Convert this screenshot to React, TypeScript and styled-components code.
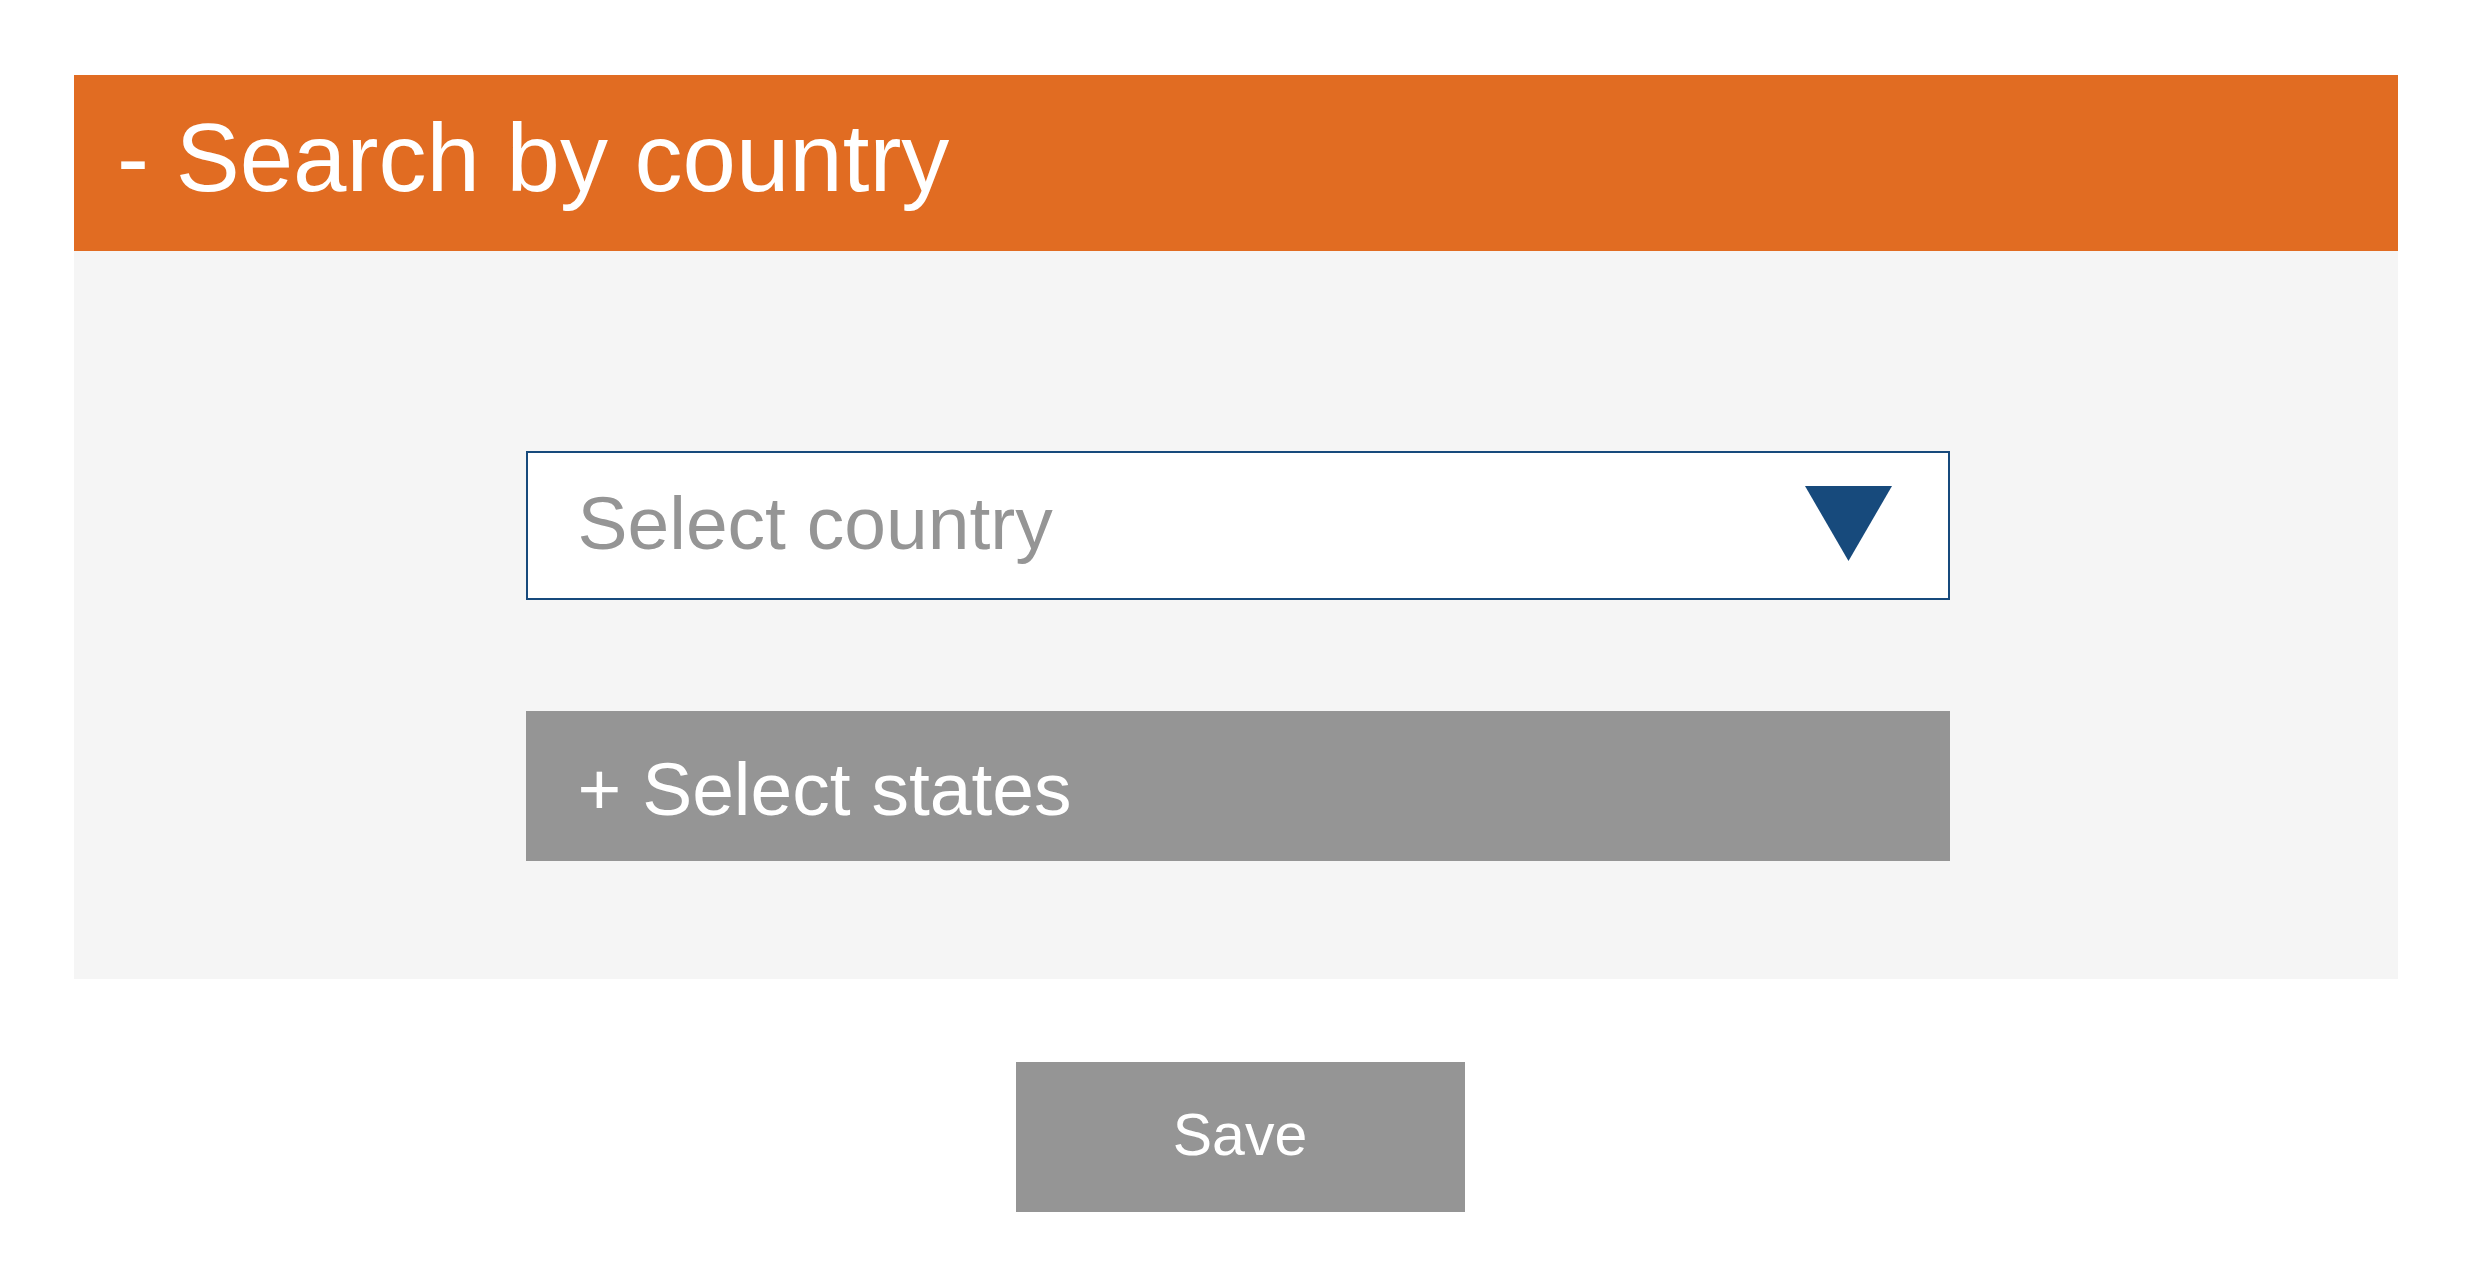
import styled, { createGlobalStyle } from "styled-components";

const GlobalStyle = createGlobalStyle`
  body {
    margin: 0;
    background: #ffffff;
    font-family: "Liberation Sans", Arial, sans-serif;
  }
`;

const Page = styled.main`
  display: flex;
  flex-direction: column;
  align-items: center;
  padding: 75px 82px 0 74px;
`;

const Section = styled.section`
  width: 100%;
  display: flex;
  flex-direction: column;
`;

const SectionHeader = styled.header`
  display: flex;
  align-items: center;
  height: 176px;
  padding: 0 0 10px 43px;
  box-sizing: border-box;
  background-color: #e16c22;
  color: #ffffff;
  font-size: 96px;
  white-space: pre;
`;

const SectionBody = styled.div`
  display: flex;
  flex-direction: column;
  align-items: center;
  gap: 111px;
  padding: 200px 0 118px 3px;
  background-color: #f5f5f5;
`;

const SelectBox = styled.div`
  display: flex;
  align-items: center;
  justify-content: space-between;
  width: 1424px;
  height: 149px;
  box-sizing: border-box;
  padding: 0 56px 6px 50px;
  border: 2px solid #174a7c;
  background-color: #ffffff;
  color: #959595;
  font-size: 75px;
`;

const Arrow = styled.svg`
  width: 87px;
  height: 75px;
  margin-top: 2px;
  flex-shrink: 0;
`;

const ExpandBar = styled.div`
  display: flex;
  align-items: center;
  width: 1424px;
  height: 150px;
  box-sizing: border-box;
  padding: 6px 0 0 52px;
  background-color: #959595;
  color: #ffffff;
  font-size: 75px;
  white-space: pre;
`;

const SaveButton = styled.button`
  margin: 83px 0 0 8px;
  width: 449px;
  height: 150px;
  border: none;
  background-color: #959595;
  color: #ffffff;
  font-family: "Liberation Sans", Arial, sans-serif;
  font-size: 59px;
  padding: 0 0 4px;
  cursor: pointer;
`;

export default function App() {
  return (
    <>
      <GlobalStyle />
      <Page>
        <Section>
          <SectionHeader>- Search by country</SectionHeader>
          <SectionBody>
            <SelectBox>
              <span>Select country</span>
              <Arrow viewBox="0 0 87 75">
                <polygon points="0,0 87,0 43.5,75" fill="#174a7c" />
              </Arrow>
            </SelectBox>
            <ExpandBar>+ Select states</ExpandBar>
          </SectionBody>
        </Section>
        <SaveButton>Save</SaveButton>
      </Page>
    </>
  );
}
